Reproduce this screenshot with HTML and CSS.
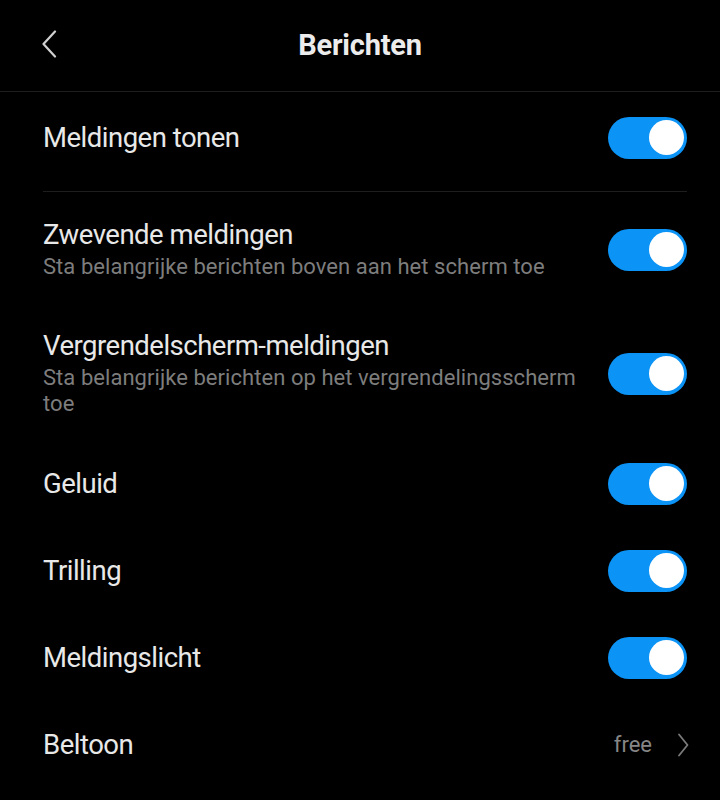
FILE: index.html
```html
<!DOCTYPE html>
<html lang="nl">
<head>
<meta charset="utf-8">
<title>Berichten</title>
<link rel="stylesheet" href="styles.css">
</head>
<body>
<div class="screen">
  <header class="header">
    <span class="back">
      <svg width="20" height="32" viewBox="0 0 20 32"><polyline points="13,1.5 1.5,14 13,26.5" fill="none" stroke="#d0d0d0" stroke-width="2.2" stroke-linecap="round" stroke-linejoin="round"/></svg>
    </span>
    <h1 class="title">Berichten</h1>
  </header>

  <div class="row simple first">
    <div class="text"><div class="label">Meldingen tonen</div></div>
    <span class="switch"><span class="knob"></span></span>
  </div>
  <div class="divider"></div>

  <div class="row sub">
    <div class="text">
      <div class="label">Zwevende meldingen</div>
      <div class="desc">Sta belangrijke berichten boven aan het scherm toe</div>
    </div>
    <span class="switch"><span class="knob"></span></span>
  </div>

  <div class="row sub">
    <div class="text">
      <div class="label">Vergrendelscherm-meldingen</div>
      <div class="desc">Sta belangrijke berichten op het vergrendelingsscherm toe</div>
    </div>
    <span class="switch"><span class="knob"></span></span>
  </div>

  <div class="row simple">
    <div class="text"><div class="label">Geluid</div></div>
    <span class="switch"><span class="knob"></span></span>
  </div>

  <div class="row simple">
    <div class="text"><div class="label">Trilling</div></div>
    <span class="switch"><span class="knob"></span></span>
  </div>

  <div class="row simple">
    <div class="text"><div class="label">Meldingslicht</div></div>
    <span class="switch"><span class="knob"></span></span>
  </div>

  <div class="row simple">
    <div class="text"><div class="label">Beltoon</div></div>
    <span class="value">free</span>
    <span class="chev">
      <svg width="12" height="24" viewBox="0 0 12 24"><polyline points="2,1.5 10.5,12 2,22.5" fill="none" stroke="#7a7a7a" stroke-width="1.8" stroke-linecap="round" stroke-linejoin="round"/></svg>
    </span>
  </div>
</div>
</body>
</html>
```

FILE: styles.css
```css
* { box-sizing: border-box; }
html, body { margin: 0; padding: 0; background: #000; }
body {
  font-family: Roboto, "Noto Sans", "Liberation Sans", sans-serif;
  color: #e8e8e8;
  width: 720px;
  height: 800px;
  overflow: hidden;
}
.screen { width: 720px; }

.header {
  position: relative;
  height: 92px;
  border-bottom: 1px solid #1e1e1e;
  display: flex;
  align-items: center;
  justify-content: center;
}
.back {
  position: absolute;
  left: 42px;
  top: 30px;
  width: 20px;
  height: 32px;
  display: flex;
}
.title {
  margin: 0;
  font-size: 29px;
  font-weight: 700;
  letter-spacing: -0.2px;
  color: #ececec;
  line-height: 34px;
  margin-top: -2px;
}

.row {
  display: flex;
  align-items: center;
  padding: 0 33px 0 43px;
}
.row.simple { min-height: 87px; }
.row.first { margin-top: 2px; }
.row.sub { padding-top: 27px; padding-bottom: 23px; }

.text { flex: 1; min-width: 0; }
.label {
  font-size: 27.5px;
  letter-spacing: -0.5px;
  line-height: 32px;
  color: #e8e8e8;
}
.desc {
  margin-top: 3px;
  font-size: 22px;
  letter-spacing: 0.05px;
  line-height: 26px;
  color: #7d7d7d;
  padding-right: 22px;
}

.divider {
  height: 1px;
  background: #1e1e1e;
  margin: 10px 33px 0 43px;
}

.switch {
  flex: none;
  width: 79px;
  height: 42px;
  border-radius: 21px;
  background: #0b93f6;
  display: flex;
  align-items: center;
  justify-content: flex-end;
  padding-right: 3px;
}
.knob {
  width: 35px;
  height: 35px;
  border-radius: 50%;
  background: #fff;
}

.value {
  font-size: 22px;
  color: #868686;
  margin-right: 25px;
}
.chev { display: flex; width: 12px; height: 24px; margin-right: -2px; }
```
